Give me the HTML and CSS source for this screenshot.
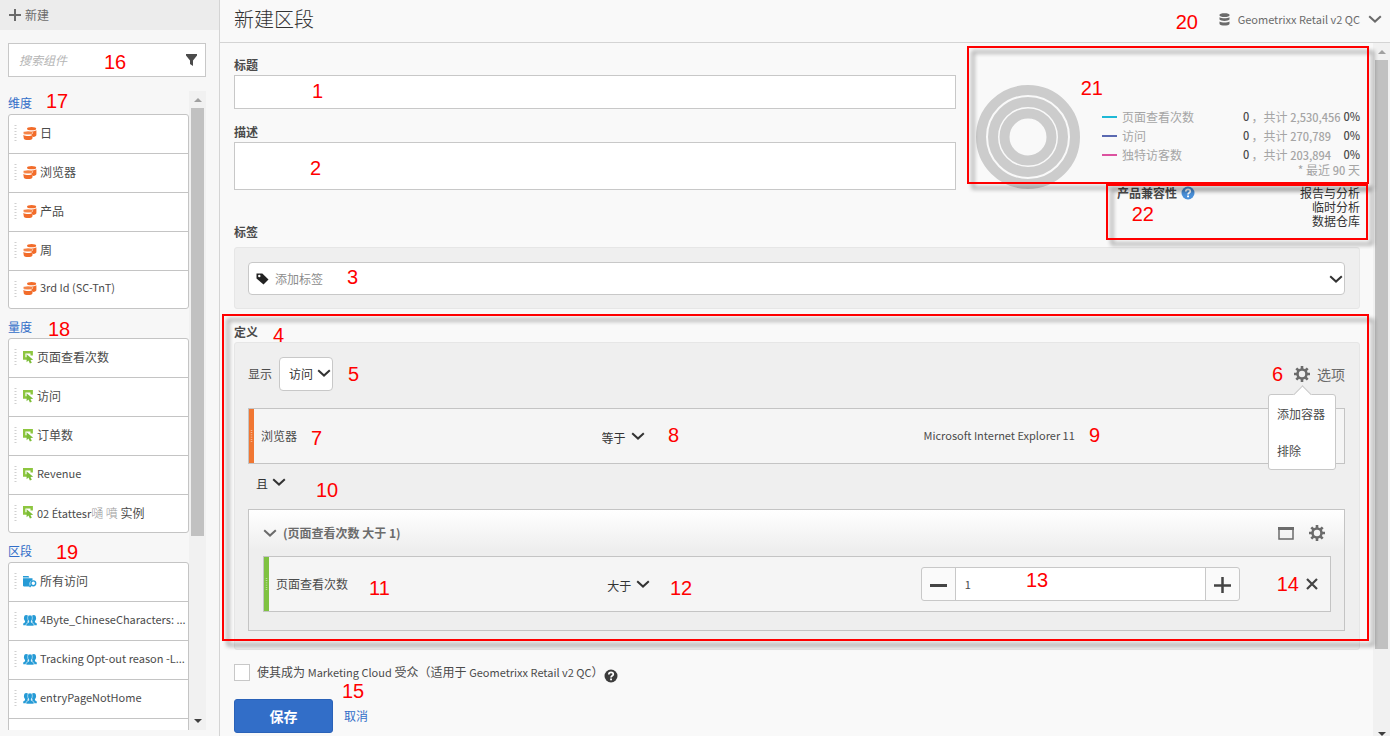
FILE: index.html
```html
<!DOCTYPE html>
<html lang="zh-CN">
<head>
<meta charset="utf-8">
<title>新建区段</title>
<link rel="stylesheet" href="styles.css">
</head>
<body>
<svg class="sprite" aria-hidden="true">
  <symbol id="chevron" viewBox="0 0 14 8"><path d="M1.2 1.2 7 6.6l5.800-5.400" fill="none" stroke="currentColor" stroke-width="2"/></symbol>
  <symbol id="grip" viewBox="0 0 3 16"><path d="M1.500 0v16" stroke="currentColor" stroke-width="2" stroke-dasharray="1 2"/></symbol>
  <symbol id="dimension" viewBox="0 0 14 13">
    <ellipse cx="8.600" cy="1.700" rx="4.600" ry="1.600" fill="#f26c2a"/>
    <path d="M5 4.200c3 .5 6.500.2 8.400-1v4.600c0 1.400-1.400 2.100-3.200 2.300z" fill="#f26c2a"/>
    <ellipse cx="5" cy="5.900" rx="4.900" ry="1.900" fill="#f58345" stroke="#fff" stroke-width=".5"/>
    <path d="M.3 7.900c2.600 1.400 7 1.400 9.500 0l-.4 3.500c-.3 1-2.200 1.500-4.300 1.500S1 12.400.8 11.400z" fill="#f26c2a"/>
  </symbol>
  <symbol id="metric" viewBox="0 0 11 13">
    <path d="M4 7.500H1.200V1.200h7.500v3.300" fill="none" stroke="#8dc63f" stroke-width="2.400"/>
    <path d="M3.600 3.200v8l1.900-1.600 1.400 3 1.900-.9-1.300-2.800 2.700-.2z" fill="#7cbd38"/>
  </symbol>
  <symbol id="visits" viewBox="0 0 14 12">
    <path d="M0 .5h5.500l.8 1.500H0zM0 2.800h9.500v2.300c-2.400.2-3.600 2.300-2.600 4.800L6 11H.8L0 10.200z" fill="#269bd6"/>
    <circle cx="10.300" cy="7.800" r="2.400" fill="none" stroke="#269bd6" stroke-width="1.400"/>
    <path d="m8.500 9.500-2 2" stroke="#269bd6" stroke-width="1.600"/>
  </symbol>
  <symbol id="people" viewBox="0 0 13 11">
    <g fill="#269bd6">
      <ellipse cx="3" cy="3.300" rx="2.100" ry="2.800"/><path d="M1.900 5.300h2.400v1.500L5 10H.2V8.300l1.700-1.200z"/>
      <ellipse cx="10" cy="3.300" rx="2.100" ry="2.800"/><path d="M11.100 5.300H8.700v1.500L8 10h4.800V8.300l-1.700-1.200z"/>
      <path d="M6.500.5c1.500 0 2.200 1 2.200 2.500 0 1.300-.4 2.300-1 2.900v1.300l2.400 1.500v1.900H2.900V8.700l2.400-1.500V5.900c-.6-.6-1-1.600-1-2.900C4.300 1.500 5 .5 6.500.5z" stroke="#fff" stroke-width=".5"/>
    </g>
  </symbol>
  <symbol id="gear" viewBox="0 0 16 16">
    <circle cx="8" cy="8" r="4.500" fill="none" stroke="currentColor" stroke-width="2.600"/>
    <path d="M8 0v3M8 13v3M0 8h3M13 8h3M2.300 2.300l2.200 2.200M11.500 11.500l2.200 2.200M13.700 2.300l-2.200 2.200M4.500 11.500l-2.200 2.200" stroke="currentColor" stroke-width="2.600"/>
  </symbol>
  <symbol id="help" viewBox="0 0 14 14">
    <circle cx="7" cy="7" r="6.500" fill="currentColor"/>
    <path d="M4.800 5.500c0-3 4.500-2.800 4.500-.3C9.300 6.800 7 6.600 7 8.600" fill="none" stroke="#fff" stroke-width="1.700"/><path d="M6.100 9.600h1.900v1.700H6.100z" fill="#fff"/>
  </symbol>
</svg>

<div class="app">
  <aside class="sidebar">
    <button class="new-button" type="button">
      <svg class="plus-icon" viewBox="0 0 12 12" aria-hidden="true"><path d="M6 0v12M0 6h12" stroke="#6b6b6b" stroke-width="2"/></svg>新建</button>
    <div class="search">
      <input class="search-input" type="search" placeholder="搜索组件" aria-label="搜索组件">
      <button class="icon-button" type="button" aria-label="筛选"><svg class="funnel-icon" viewBox="0 0 11 12" aria-hidden="true"><path d="M0 0h11v1.500L7 6.500V12L4 10V6.500L0 1.500z" fill="#4b4b4b"/></svg></button>
    </div>
    <div class="browser">
      <div class="browser-lists">
        <section class="group">
          <h2 class="group-title">维度</h2>
          <ul class="items">
            <li class="item"><svg class="grip"><use href="#grip"/></svg><svg class="dimension-icon"><use href="#dimension"/></svg><span class="item-name">日</span></li>
            <li class="item"><svg class="grip"><use href="#grip"/></svg><svg class="dimension-icon"><use href="#dimension"/></svg><span class="item-name">浏览器</span></li>
            <li class="item"><svg class="grip"><use href="#grip"/></svg><svg class="dimension-icon"><use href="#dimension"/></svg><span class="item-name">产品</span></li>
            <li class="item"><svg class="grip"><use href="#grip"/></svg><svg class="dimension-icon"><use href="#dimension"/></svg><span class="item-name">周</span></li>
            <li class="item"><svg class="grip"><use href="#grip"/></svg><svg class="dimension-icon"><use href="#dimension"/></svg><span class="item-name latin">3rd Id (SC-TnT)</span></li>
          </ul>
        </section>
        <section class="group">
          <h2 class="group-title">量度</h2>
          <ul class="items">
            <li class="item"><svg class="grip"><use href="#grip"/></svg><svg class="metric-icon"><use href="#metric"/></svg><span class="item-name">页面查看次数</span></li>
            <li class="item"><svg class="grip"><use href="#grip"/></svg><svg class="metric-icon"><use href="#metric"/></svg><span class="item-name">访问</span></li>
            <li class="item"><svg class="grip"><use href="#grip"/></svg><svg class="metric-icon"><use href="#metric"/></svg><span class="item-name">订单数</span></li>
            <li class="item"><svg class="grip"><use href="#grip"/></svg><svg class="metric-icon"><use href="#metric"/></svg><span class="item-name latin">Revenue</span></li>
            <li class="item"><svg class="grip"><use href="#grip"/></svg><svg class="metric-icon"><use href="#metric"/></svg><span class="item-name"><span class="latin">02 Étattesr</span><span class="faint">嗵 噴</span> 实例</span></li>
          </ul>
        </section>
        <section class="group">
          <h2 class="group-title">区段</h2>
          <ul class="items">
            <li class="item"><svg class="grip"><use href="#grip"/></svg><svg class="dimension-icon"><use href="#visits"/></svg><span class="item-name">所有访问</span></li>
            <li class="item"><svg class="grip"><use href="#grip"/></svg><svg class="dimension-icon"><use href="#people"/></svg><span class="item-name latin">4Byte_ChineseCharacters: ...</span></li>
            <li class="item"><svg class="grip"><use href="#grip"/></svg><svg class="dimension-icon"><use href="#people"/></svg><span class="item-name latin">Tracking Opt-out reason -L...</span></li>
            <li class="item"><svg class="grip"><use href="#grip"/></svg><svg class="dimension-icon"><use href="#people"/></svg><span class="item-name latin">entryPageNotHome</span></li>
            <li class="item"></li>
          </ul>
        </section>
      </div>
      <div class="scrollbar" aria-hidden="true"><span class="arrow arrow-up"></span><span class="thumb thumb-side"></span><span class="arrow arrow-down"></span></div>
    </div>
  </aside>

  <main class="main">
    <header class="topbar">
      <h1 class="page-title">新建区段</h1>
      <button class="suite" type="button">
        <svg class="database-icon" viewBox="0 0 11 13" aria-hidden="true"><path d="M.5 1.800C.5.900 2.500.2 5.500.2s5 .7 5 1.600v.8c0 .9-2 1.500-5 1.500s-5-.6-5-1.500zM.5 4.300c2.500 1.300 7.500 1.300 10 0v2.300c-1 1.800-9 1.800-10 0zM.5 8.400c2.500 1.400 7.500 1.400 10 0v2.700c-1 2-9 2-10 0z" fill="#6b6b6b"/></svg>
        <span class="latin">Geometrixx Retail v2 QC</span>
        <svg class="chevron"><use href="#chevron"/></svg>
      </button>
    </header>
    <div class="scroller">
      <form class="content">
        <div class="intro">
          <div class="fields">
            <label class="label" for="title">标题</label>
            <input class="box title-box" id="title" type="text">
            <label class="label" for="desc">描述</label>
            <textarea class="box desc-box" id="desc"></textarea>
            <label class="label" for="tags">标签</label>
          </div>
          <div class="summary">
            <div class="preview">
              <svg class="rings" viewBox="0 0 104 104" aria-hidden="true"><g fill="none" stroke="#ccc" stroke-width="10"><circle cx="52" cy="52" r="47"/><circle cx="52" cy="52" r="35"/><circle cx="52" cy="52" r="23.500"/></g></svg>
              <div class="legend">
                <table class="stats">
                  <tr><th class="stat-name" scope="row"><span class="swatch cyan"></span>页面查看次数</th><td class="stat-count">0</td><td class="stat-total">，共计 <b>2,530,456</b></td><td class="stat-share">0%</td></tr>
                  <tr><th class="stat-name" scope="row"><span class="swatch indigo"></span>访问</th><td class="stat-count">0</td><td class="stat-total">，共计 <b>270,789</b></td><td class="stat-share">0%</td></tr>
                  <tr><th class="stat-name" scope="row"><span class="swatch pink"></span>独特访客数</th><td class="stat-count">0</td><td class="stat-total">，共计 <b>203,894</b></td><td class="stat-share">0%</td></tr>
                </table>
                <p class="stats-note">* 最近 <b>90</b> 天</p>
              </div>
            </div>
            <div class="compat">
              <h2 class="compat-title">产品兼容性 <svg class="help-icon blue"><use href="#help"/></svg></h2>
              <ul class="compat-list"><li>报告与分析</li><li>临时分析</li><li>数据仓库</li></ul>
            </div>
          </div>
        </div>

        <div class="panel">
          <div class="tag-box">
            <svg class="tag-icon" viewBox="0 0 13 12" aria-hidden="true"><path d="M.5.500h5.800l6.200 6-5 5-7-6z" fill="#222"/><circle cx="3.300" cy="3" r="1.200" fill="#fff"/></svg>
            <input class="tag-input" id="tags" type="text" placeholder="添加标签">
            <svg class="chevron"><use href="#chevron"/></svg>
          </div>
        </div>

        <h2 class="label definition-title">定义</h2>
        <div class="panel definition">
          <div class="show-row">
            <label for="show">显示</label>
            <span class="pick pick-boxed"><select id="show"><option>访问</option></select><svg class="chevron"><use href="#chevron"/></svg></span>
            <div class="options">
              <button class="options-button" type="button"><svg class="gear"><use href="#gear"/></svg>选项</button>
              <div class="menu"><button class="menu-item" type="button">添加容器</button><button class="menu-item" type="button">排除</button></div>
            </div>
          </div>
          <div class="rule orange">
            <span class="handle"><svg class="grip"><use href="#grip"/></svg></span>
            <span class="rule-name">浏览器</span>
            <span class="pick"><select aria-label="浏览器运算符"><option>等于</option></select><svg class="chevron"><use href="#chevron"/></svg></span>
            <span class="latin rule-text">Microsoft Internet Explorer 11</span>
          </div>
          <div class="join"><span class="pick pick-short"><select aria-label="逻辑运算符"><option>且</option></select><svg class="chevron"><use href="#chevron"/></svg></span></div>
          <div class="container">
            <div class="container-head">
              <svg class="chevron"><use href="#chevron"/></svg>
              <h3 class="container-title">(页面查看次数 大于 1)</h3>
              <button class="icon-button" type="button" aria-label="容器"><svg class="window-icon" viewBox="0 0 16 13"><path d="M1 1h14v11H1z" fill="none" stroke="currentColor" stroke-width="1.500"/><path d="M0 0h16v3H0z" fill="currentColor"/></svg></button>
              <button class="icon-button" type="button" aria-label="设置"><svg class="gear"><use href="#gear"/></svg></button>
            </div>
            <div class="rule green">
              <span class="handle"><svg class="grip"><use href="#grip"/></svg></span>
              <span class="rule-name">页面查看次数</span>
              <span class="pick"><select aria-label="页面查看次数运算符"><option>大于</option></select><svg class="chevron"><use href="#chevron"/></svg></span>
              <div class="rule-value">
                <div class="stepper">
                  <button class="step" type="button" aria-label="减少"><svg class="step-icon" viewBox="0 0 17 17"><path d="M0 9.500h17" stroke="currentColor" stroke-width="3"/></svg></button>
                  <input class="step-input" type="text" value="1" aria-label="数值">
                  <button class="step" type="button" aria-label="增加"><svg class="step-icon" viewBox="0 0 17 17"><path d="M0 9.500h17M8.500 1v16" stroke="currentColor" stroke-width="2.500"/></svg></button>
                </div>
                <button class="icon-button" type="button" aria-label="删除"><svg class="close-icon" viewBox="0 0 12 12"><path d="m1 1 10 10M11 1 1 11" stroke="currentColor" stroke-width="2.200"/></svg></button>
              </div>
            </div>
          </div>
        </div>

        <div class="audience">
          <input class="check" id="audience" type="checkbox">
          <label for="audience">使其成为 <span class="latin">Marketing Cloud</span> 受众（适用于 <span class="latin">Geometrixx Retail v2 QC</span>）</label>
          <svg class="help-icon dark"><use href="#help"/></svg>
        </div>
        <div class="actions"><button class="save" type="button">保存</button><a class="cancel" href="#">取消</a></div>
      </form>
      <div class="scrollbar" aria-hidden="true"><span class="arrow arrow-up"></span><span class="thumb thumb-main"></span><span class="arrow arrow-down arrow-end"></span></div>
    </div>
  </main>

  <div class="frame frame-preview"></div>
  <div class="frame frame-compat"></div>
  <div class="frame frame-definition"></div>
  <span class="pin pin-1">1</span><span class="pin pin-2">2</span><span class="pin pin-3">3</span><span class="pin pin-4">4</span><span class="pin pin-5">5</span><span class="pin pin-6">6</span><span class="pin pin-7">7</span><span class="pin pin-8">8</span><span class="pin pin-9">9</span><span class="pin pin-10">10</span><span class="pin pin-11">11</span><span class="pin pin-12">12</span><span class="pin pin-13">13</span><span class="pin pin-14">14</span><span class="pin pin-15">15</span><span class="pin pin-16">16</span><span class="pin pin-17">17</span><span class="pin pin-18">18</span><span class="pin pin-19">19</span><span class="pin pin-20">20</span><span class="pin pin-21">21</span><span class="pin pin-22">22</span>
</div>
</body>
</html>
```
FILE: styles.css
```css
* { box-sizing: border-box; }
body { margin: 0; background: #f9f9f9; color: #4b4b4b; font: 12px/20px "Noto Sans CJK SC", sans-serif; }
button, input, select, textarea { margin: 0; font: inherit; color: inherit; }
button { padding: 0; border: 0; background: none; }
h1, h2, h3, ul, p { margin: 0; padding: 0; font-size: inherit; list-style: none; }
svg { display: block; flex: none; }
.sprite { display: none; }
.latin { font-size: 11px; }
.app { position: relative; display: flex; height: 100vh; overflow: hidden; }

/* component browser */
.sidebar { display: flex; flex-direction: column; flex: none; width: 220px; padding-bottom: 6px; border-right: 1px solid #d4d4d4; background: #f7f7f7; }
.new-button { display: flex; align-items: center; gap: 4px; flex: none; height: 30px; padding-left: 9px; background: #ececec; color: #6b6b6b; }
.plus-icon { width: 12px; height: 12px; }
.search { display: flex; align-items: center; flex: none; height: 34px; margin: 13px 13px 14px 8px; padding: 0 8px 0 10px; border: 1px solid #c8c8c8; background: #fff; }
.search-input { flex: 1; min-width: 0; padding: 0; border: 0; outline: 0; background: none; font-style: italic; }
.search-input::placeholder { color: #b5b5b5; }
.funnel-icon { width: 11px; height: 12px; }
.browser { display: flex; flex: 1; min-height: 0; margin: 0 13px 0 8px; }
.browser-lists { flex: 1; min-width: 0; overflow: hidden; }
.group { margin-bottom: 6px; }
.group-title { height: 23px; line-height: 23px; color: #326ec8; font-weight: 400; }
.items { border: 1px solid #c4c4c4; border-radius: 3px; background: #fff; }
.item { display: flex; align-items: center; height: 39px; padding: 0 0 2px 5px; border-bottom: 1px solid #c4c4c4; }
.item:last-child { height: 37px; border-bottom: 0; }
.item .grip { margin-right: 6px; }
.item-name { white-space: nowrap; }
.item-name.latin { margin-bottom: 3px; }
.grip { width: 3px; height: 16px; color: #d0d0d0; }
.dimension-icon { width: 14px; height: 13px; margin-right: 3px; }
.metric-icon { width: 11px; height: 13px; margin-right: 3px; }
.faint { color: #9a9a9a; font-weight: 300; }

/* scrollbars */
.scrollbar { display: flex; flex-direction: column; align-items: center; flex: none; width: 17px; background: #f1f1f1; }
.arrow { margin: 7px 0; border: 4px solid transparent; }
.arrow-up { border-top: 0; border-bottom-color: #a0a0a0; margin-bottom: 6px; }
.arrow-down { border-bottom: 0; border-top-color: #404040; margin-top: auto; }
.arrow-end { margin-bottom: 0; }
.thumb { width: 13px; background: #c1c1c1; }
.thumb-side { height: 67%; }
.thumb-main { height: 85%; }

/* top bar */
.main { display: flex; flex-direction: column; flex: 1; min-width: 0; }
.topbar { display: flex; align-items: center; justify-content: space-between; flex: none; height: 43px; padding: 0 8px 4px 14px; border-bottom: 1px solid #d4d4d4; }
.page-title { font-size: 20px; font-weight: 300; color: #333; }
.suite { display: flex; align-items: center; gap: 8px; color: #6b6b6b; }
.database-icon { width: 11px; height: 13px; }
.chevron { width: 14px; height: 8px; }
.scroller { display: flex; flex: 1; min-height: 0; }
.content { flex: 1; min-width: 0; padding: 12px 13px 0 14px; }

/* title, description and preview */
.intro { display: grid; grid-template-columns: 1fr 384px; gap: 20px; margin-bottom: 5px; }
.fields { display: flex; flex-direction: column; }
.label { font-weight: 700; line-height: 20px; }
.box { padding: 0 10px; border: 1px solid #c8c8c8; background: #fff; }
.title-box { height: 34px; margin-bottom: 13px; }
.desc-box { height: 48px; margin-bottom: 32px; resize: none; }
.summary { padding-top: 30px; }
.preview { display: flex; justify-content: space-between; height: 101px; }
.rings { width: 104px; height: 104px; }
.legend { width: 258px; padding-top: 22px; }
.stats { width: 100%; border-collapse: collapse; color: #a5a5a5; }
.stats th, .stats td { height: 19px; padding: 0; line-height: 17px; font-weight: 400; text-align: left; white-space: nowrap; }
.stats b, .stats-note b { font-weight: 500; font-size: 11px; }
.stats .stat-name { width: 141px; }
.swatch { display: inline-block; width: 15px; height: 2px; margin-right: 5px; vertical-align: 4px; }
.cyan { background: #1fb9d6; }
.indigo { background: #5a69b1; }
.pink { background: #dc52a0; }
.stats .stat-total { padding-left: 2px; }
.stats .stat-count, .stats .stat-share { color: #4b4b4b; font-size: 11px; font-weight: 500; }
.stats .stat-share { text-align: right; }
.stats-note { color: #a5a5a5; line-height: 12px; text-align: right; }
.compat { display: flex; justify-content: space-between; padding-left: 141px; }
.compat-title { display: flex; align-items: center; gap: 4px; height: 14px; }
.compat-list { line-height: 14px; text-align: right; color: #333; }
.help-icon { width: 14px; height: 14px; }
.blue { color: #4a90d9; }
.dark { color: #3c3c3c; }

/* panels */
.panel { padding: 14px 14px 13px 13px; border: 1px solid #e6e6e6; border-radius: 3px; background: #efefef; }
.tag-box { display: flex; align-items: center; gap: 6px; height: 33px; padding: 0 1px 0 7px; border: 1px solid #c8c8c8; border-radius: 4px; background: #fff; color: #333; }
.tag-icon { width: 13px; height: 12px; }
.tag-input { flex: 1; min-width: 0; padding: 0; border: 0; outline: 0; background: none; }
.tag-input::placeholder { color: #8c8c8c; }
.definition-title { margin-top: 13px; }
.definition { padding-bottom: 18px; }
.show-row { display: flex; align-items: center; gap: 7px; height: 34px; margin-bottom: 17px; }
.pick { position: relative; display: flex; align-items: center; width: 44px; height: 34px; color: #333; }
.pick select { appearance: none; width: 100%; height: 100%; padding: 0; border: 0; border-radius: 4px; background: none; }
.pick .chevron { position: absolute; top: 11px; right: 1px; pointer-events: none; }
.pick-boxed { width: 54px; border: 1px solid #c8c8c8; border-radius: 4px; background: #fff; }
.pick-boxed select { padding-left: 9px; }
.pick-short { width: 31px; }
.options { position: relative; margin-left: auto; }
.options-button { display: flex; align-items: center; gap: 7px; color: #6b6b6b; font-size: 14px; }
.gear { width: 16px; height: 16px; }
.menu { position: absolute; z-index: 1; top: 30px; right: 9px; width: 68px; border: 1px solid #c8c8c8; border-radius: 3px; background: #fff; }
.menu::before { content: ""; position: absolute; top: -7px; left: 27px; width: 12px; height: 12px; border: solid #c8c8c8; border-width: 1px 0 0 1px; background: #fff; transform: rotate(45deg); }
.menu-item { position: relative; display: block; height: 37px; padding-left: 8px; white-space: nowrap; }

/* rules */
.rule { position: relative; display: grid; grid-template-columns: 32.2% 29.4% 38.4%; align-items: center; height: 56px; border: 1px solid #c4c4c4; background: #f5f5f5; }
.rule .pick { margin-top: 3px; }
.handle { position: absolute; top: 0; bottom: 0; left: 0; display: flex; align-items: center; justify-content: center; width: 5px; }
.handle .grip { color: #fff; opacity: .6; height: 12px; }
.orange .handle { background: #f07632; }
.green .handle { background: #7fc241; }
.rule-name { padding-left: 12px; }
.rule-text { margin-bottom: 3px; }
.join { display: flex; align-items: center; height: 45px; padding: 0 8px 5px; }
.container { padding: 0 13px 18px 14px; border: 1px solid #c4c4c4; background: linear-gradient(#fff, #eee 40px); }
.container-head { display: flex; align-items: center; height: 46px; color: #6b6b6b; }
.container-title { flex: 1; margin-left: 6px; }
.window-icon { width: 16px; height: 13px; margin-right: 15px; }
.container-head .gear { margin-right: 6px; }
.rule-value { display: flex; align-items: center; justify-content: space-between; padding-right: 12px; }
.stepper { display: flex; flex: 0 1 319px; min-width: 0; height: 34px; border: 1px solid #c8c8c8; border-radius: 3px; background: #fafafa; }
.step { display: flex; align-items: center; justify-content: center; flex: none; width: 33px; color: #444; }
.step-icon { width: 17px; height: 17px; }
.step-input { flex: 1; min-width: 0; padding: 0 9px; border: solid #c8c8c8; border-width: 0 1px; background: #fff; font-size: 11px; }
.close-icon { width: 12px; height: 12px; color: #444; }

/* footer */
.audience { display: flex; align-items: center; height: 18px; margin: 13px 0 18px; }
.check { appearance: none; width: 16px; height: 17px; margin-right: 7px; border: 1px solid #c8c8c8; background: #fff; }
.audience .help-icon { margin-top: 8px; }
.actions { display: flex; align-items: center; gap: 11px; }
.save { width: 99px; height: 34px; border: 1px solid #2a62b8; border-radius: 3px; background: #326ec8; color: #fff; font-size: 14px; font-weight: 700; }
.cancel { color: #326ec8; text-decoration: none; }

/* numbered callouts laid over the interface */
.frame { position: absolute; z-index: 2; border: 2px solid #f00; filter: drop-shadow(5px 5px 2px rgba(0, 0, 0, .45)); pointer-events: none; }
.frame-preview { top: 46px; right: 21px; width: 402px; height: 138px; }
.frame-compat { top: 184px; right: 22px; width: 262px; height: 56px; }
.frame-definition { top: 314px; right: 21px; left: 222px; height: 327px; }
.pin { position: absolute; z-index: 3; color: #f00; font: 20px/20px "Liberation Sans", Arial, sans-serif; pointer-events: none; }
.pin-1 { top: 81px; left: 312px; }
.pin-2 { top: 158px; left: 310px; }
.pin-3 { top: 267px; left: 347px; }
.pin-4 { top: 325px; left: 273px; }
.pin-5 { top: 364px; left: 348px; }
.pin-6 { top: 364px; right: 107px; }
.pin-7 { top: 428px; left: 311px; }
.pin-8 { top: 425px; left: 668px; }
.pin-9 { top: 425px; left: 1089px; }
.pin-10 { top: 480px; left: 316px; }
.pin-11 { top: 578px; left: 369px; }
.pin-12 { top: 578px; left: 670px; }
.pin-13 { top: 570px; left: 1026px; }
.pin-14 { top: 574px; right: 91px; }
.pin-15 { top: 681px; left: 342px; }
.pin-16 { top: 52px; left: 104px; }
.pin-17 { top: 91px; left: 46px; }
.pin-18 { top: 319px; left: 48px; }
.pin-19 { top: 542px; left: 56px; }
.pin-20 { top: 12px; right: 192px; }
.pin-21 { top: 78px; right: 287px; }
.pin-22 { top: 204px; right: 236px; }
```
